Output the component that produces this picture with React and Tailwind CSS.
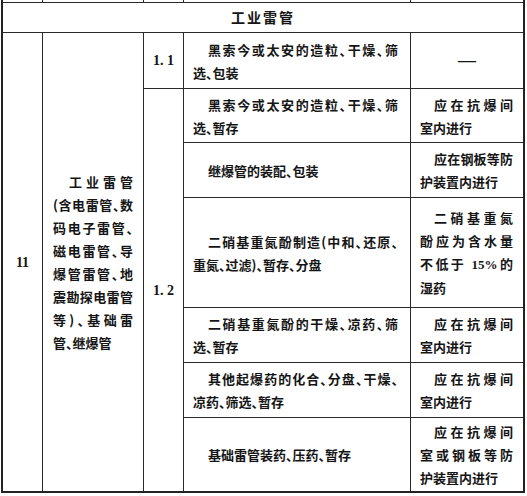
import React from 'react';

const cjk = "font-['Noto_Sans_CJK_SC',sans-serif] font-bold [font-feature-settings:'halt']";
const serif = "font-['Liberation_Serif',serif] font-bold";

function Para({ lines, indent = 'indent-[15px]' }) {
  return (
    <div className="leading-[23px]">
      {lines.map((line, i) => (
        <div
          key={i}
          className={`${i === 0 ? indent : ''} ${i < lines.length - 1 ? 'text-justify [text-align-last:justify]' : ''}`}
        >
          {line}
        </div>
      ))}
    </div>
  );
}

const rows = [
  {
    row: 'row-start-4',
    work: ['黑索今或太安的造粒、干燥、筛', '选、暂存'],
    note: ['应在抗爆间', '室内进行'],
  },
  {
    row: 'row-start-5',
    work: ['继爆管的装配、包装'],
    note: ['应在钢板等防', '护装置内进行'],
  },
  {
    row: 'row-start-6',
    work: ['二硝基重氮酚制造(中和、还原、', '重氮、过滤)、暂存、分盘'],
    note: [
      '二硝基重氮',
      '酚应为含水量',
      <>不低于 <span className={serif}>15%</span>的</>,
      '湿药',
    ],
  },
  {
    row: 'row-start-7',
    work: ['二硝基重氮酚的干燥、凉药、筛', '选、暂存'],
    note: ['应在抗爆间', '室内进行'],
  },
  {
    row: 'row-start-8',
    work: ['其他起爆药的化合、分盘、干燥、', '凉药、筛选、暂存'],
    note: ['应在抗爆间', '室内进行'],
  },
  {
    row: 'row-start-9',
    work: ['基础雷管装药、压药、暂存'],
    note: ['应在抗爆间', '室或钢板等防', '护装置内进行'],
  },
];

export default function App() {
  return (
    <div className={`w-[527px] h-[496px] bg-white text-[13px] text-[#151515] ${cjk}`}>
      <div className="ml-px w-[524px] grid grid-cols-[39px_100px_39px_226px_112px] grid-rows-[2px_29px_55px_53px_54px_109px_54px_54px_73px] gap-px bg-[#2a2a2a] border-x-2 border-b-2 border-[#222]">
        {/* cut-off row from the previous page */}
        <div className="bg-white col-start-1 row-start-1" />
        <div className="bg-white col-start-2 row-start-1" />
        <div className="bg-white col-start-3 row-start-1" />
        <div className="bg-white col-start-4 row-start-1" />
        <div className="bg-white col-start-5 row-start-1" />

        <div className="bg-white col-span-5 row-start-2 flex items-center justify-center text-[14px] tracking-[2px]">
          工业雷管
        </div>

        <div className={`bg-white col-start-1 row-start-3 row-span-7 flex items-center justify-center text-[14px] ${serif}`}>
          11
        </div>

        <div className="bg-white col-start-2 row-start-3 row-span-7 flex flex-col justify-center px-[10px]">
          <Para
            indent="indent-[16px]"
            lines={[
              '工业雷管',
              '(含电雷管、数',
              '码电子雷管、',
              '磁电雷管、导',
              '爆管雷管、地',
              '震勘探电雷管',
              '等)、基础雷',
              '管、继爆管',
            ]}
          />
        </div>

        <div className={`bg-white col-start-3 row-start-3 flex items-center justify-center text-[14px] ${serif}`}>
          1. 1
        </div>
        <div className="bg-white col-start-4 row-start-3 flex flex-col justify-center pl-[9px] pr-[12px]">
          <Para lines={['黑索今或太安的造粒、干燥、筛', '选、包装']} />
        </div>
        <div className={`bg-white col-start-5 row-start-3 flex items-center justify-center text-[18px] ${serif}`}>
          —
        </div>

        <div className={`bg-white col-start-3 row-start-4 row-span-6 flex items-center justify-center text-[14px] ${serif}`}>
          1. 2
        </div>

        {rows.map((r, i) => (
          <React.Fragment key={i}>
            <div className={`bg-white col-start-4 ${r.row} flex flex-col justify-center pl-[9px] pr-[12px]`}>
              <Para lines={r.work} />
            </div>
            <div className={`bg-white col-start-5 ${r.row} flex flex-col justify-center pl-[9px] pr-[10px]`}>
              <Para indent="indent-[14px]" lines={r.note} />
            </div>
          </React.Fragment>
        ))}
      </div>
    </div>
  );
}
